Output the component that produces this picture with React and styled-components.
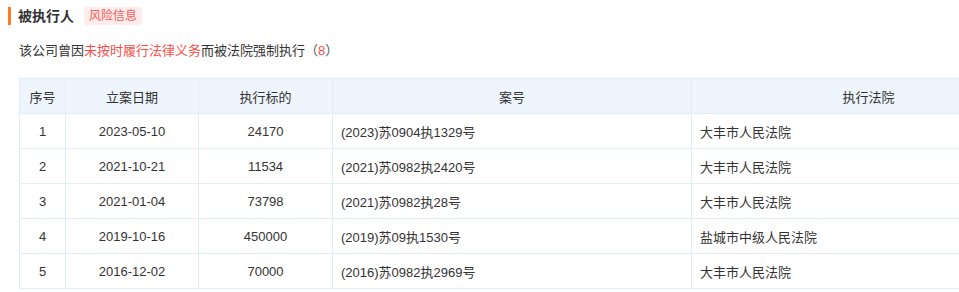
import React from "react";
import styled, { createGlobalStyle } from "styled-components";

const rows = [
  { no: 1, date: "2023-05-10", amount: "24170", caseNo: "(2023)苏0904执1329号", court: "大丰市人民法院" },
  { no: 2, date: "2021-10-21", amount: "11534", caseNo: "(2021)苏0982执2420号", court: "大丰市人民法院" },
  { no: 3, date: "2021-01-04", amount: "73798", caseNo: "(2021)苏0982执28号", court: "大丰市人民法院" },
  { no: 4, date: "2019-10-16", amount: "450000", caseNo: "(2019)苏09执1530号", court: "盐城市中级人民法院" },
  { no: 5, date: "2016-12-02", amount: "70000", caseNo: "(2016)苏0982执2969号", court: "大丰市人民法院" },
];

const columns = [
  { key: "no", label: "序号", width: 46, align: "center" },
  { key: "date", label: "立案日期", width: 133, align: "center" },
  { key: "amount", label: "执行标的", width: 134, align: "center" },
  { key: "caseNo", label: "案号", width: 359, align: "left" },
  { key: "court", label: "执行法院", width: 354, align: "left" },
];

const App = () => {
  return (
    <Page>
      <GlobalStyle />
      <Header>
        <Title>被执行人</Title>
        <Badge>风险信息</Badge>
      </Header>
      <Summary>
        该公司曾因<Red>未按时履行法律义务</Red>而被法院强制执行<Paren>（</Paren>
        <Red>8</Red>
        <Paren>）</Paren>
      </Summary>
      <Table>
        <colgroup>
          {columns.map((c) => (
            <col key={c.key} style={{ width: c.width }} />
          ))}
        </colgroup>
        <thead>
          <tr>
            {columns.map((c) => (
              <Th key={c.key}>{c.label}</Th>
            ))}
          </tr>
        </thead>
        <tbody>
          {rows.map((r) => (
            <tr key={r.no}>
              {columns.map((c) => (
                <Td key={c.key} align={c.align}>
                  {r[c.key]}
                </Td>
              ))}
            </tr>
          ))}
        </tbody>
      </Table>
    </Page>
  );
};

const GlobalStyle = createGlobalStyle`
  html, body {
    margin: 0;
    padding: 0;
    background: #fff;
    overflow: hidden;
  }
  body {
    font-family: "Liberation Sans", "Noto Sans CJK SC", sans-serif;
    color: #333;
  }
`;

const Page = styled.div`
  width: 959px;
  height: 292px;
  overflow: hidden;
  padding: 7px 0 0 8px;
  box-sizing: border-box;
`;

const Header = styled.div`
  display: flex;
  align-items: center;
  height: 18px;
  border-left: 3px solid #ff7a1a;
  padding-left: 7px;
`;

const Title = styled.div`
  font-size: 14px;
  font-weight: bold;
  color: #333;
  line-height: 18px;
`;

const Badge = styled.div`
  margin-left: 10px;
  height: 18px;
  line-height: 18px;
  padding: 0 5px;
  background: #ffeceb;
  color: #fd5a57;
  font-size: 12px;
  border-radius: 2px;
`;

const Summary = styled.div`
  margin: 18px 0 0 11px;
  font-size: 13px;
  line-height: 16px;
  color: #333;
`;

const Red = styled.span`
  color: #fd4d48;
`;

const Paren = styled.span`
  color: #555;
`;

const Table = styled.table`
  margin: 19px 0 0 11px;
  width: 1026px;
  border-collapse: collapse;
  table-layout: fixed;
  font-size: 13px;
`;

const Th = styled.th`
  height: 34px;
  background: #eef5fd;
  border: 1px solid #e2ecf6;
  font-weight: normal;
  color: #333;
  text-align: center;
  padding: 0;
`;

const Td = styled.td`
  height: 34px;
  border: 1px solid #e2ecf6;
  color: #333;
  text-align: ${(p) => p.align};
  padding: ${(p) => (p.align === "left" ? "0 0 0 8px" : "0")};
`;

export default App;
